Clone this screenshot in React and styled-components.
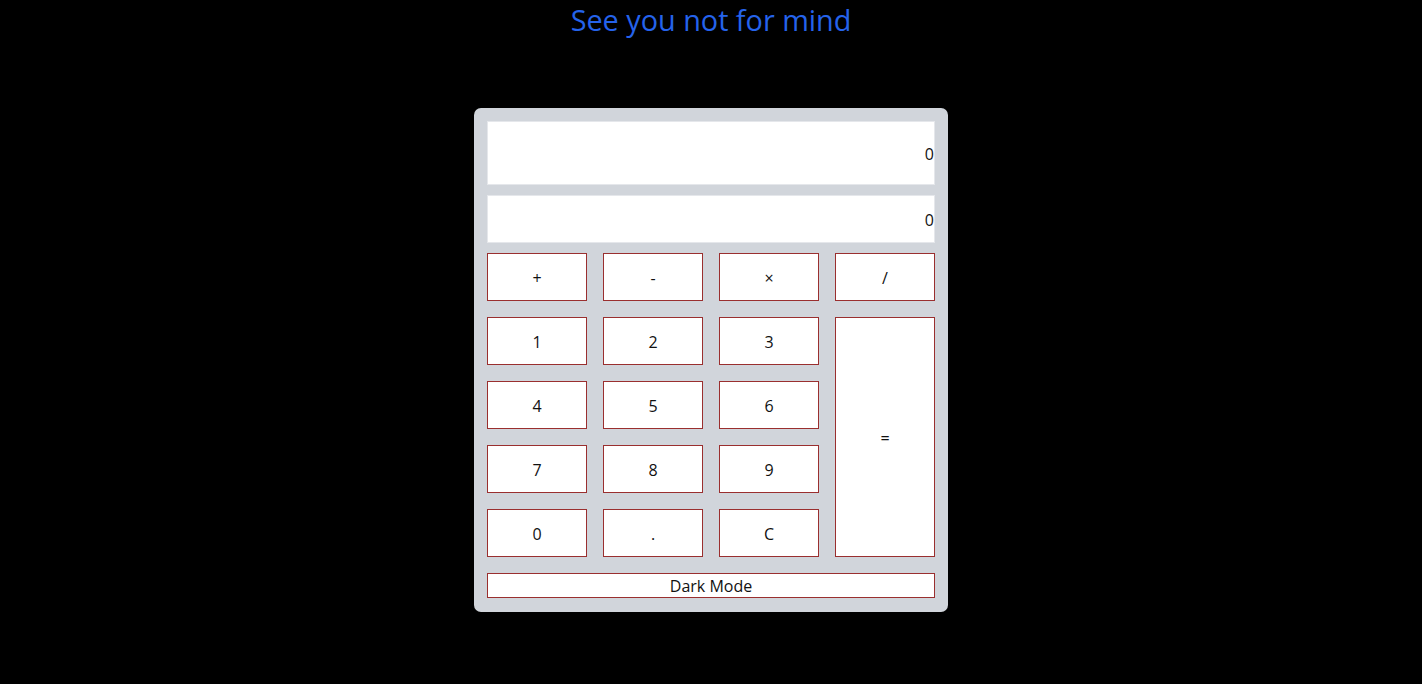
import React, { useState } from 'react';
import styled, { createGlobalStyle } from 'styled-components';

const GlobalStyle = createGlobalStyle`
  html, body {
    margin: 0;
    padding: 0;
    background: #000;
    font-family: "Open Sans", "Noto Sans", sans-serif;
  }
`;

const Page = styled.div`
  min-height: 684px;
  display: flex;
  flex-direction: column;
  align-items: center;
`;

const Title = styled.h1`
  margin: 0;
  height: 108px;
  padding-top: 1px;
  box-sizing: border-box;
  font-size: 28.8px;
  font-weight: 400;
  color: #2563eb;
  line-height: 38px;
`;

const Panel = styled.div`
  width: 474px;
  box-sizing: border-box;
  padding: 13px 13px 14px;
  background: #d1d5db;
  border-radius: 7px;
  display: flex;
  flex-direction: column;
`;

const Display = styled.div`
  height: ${({ $h }) => $h}px;
  margin-bottom: 10px;
  padding-top: 2px;
  box-sizing: border-box;
  background: #fff;
  border: 1px solid #e5e7eb;
  display: flex;
  align-items: center;
  justify-content: flex-end;
  font-size: 16px;
  color: #111;
`;

const Keys = styled.div`
  display: grid;
  grid-template-columns: repeat(4, 100px);
  grid-auto-rows: 48px;
  gap: 16px;
`;

const Key = styled.button`
  box-sizing: border-box;
  background: #fff;
  border: 1px solid #9a2f2f;
  color: #111;
  font-family: inherit;
  font-size: 16px;
  padding: 2px 0 0;
  cursor: pointer;
  grid-row: ${({ $tall }) => ($tall ? 'span 4' : 'auto')};
  grid-column: ${({ $col }) => $col || 'auto'};
`;

const ModeButton = styled.button`
  margin-top: 16px;
  height: 25px;
  box-sizing: border-box;
  background: #fff;
  border: 1px solid #9a2f2f;
  color: #111;
  font-family: inherit;
  font-size: 16px;
  padding: 0;
  line-height: 22px;
`;

const App = () => {
  const [top] = useState('0');
  const [bottom] = useState('0');
  return (
    <Page>
      <GlobalStyle />
      <Title>See you not for mind</Title>
      <Panel>
        <Display $h={64}>{top}</Display>
        <Display $h={48}>{bottom}</Display>
        <Keys>
          <Key>+</Key>
          <Key>-</Key>
          <Key>×</Key>
          <Key>/</Key>
          <Key>1</Key>
          <Key>2</Key>
          <Key>3</Key>
          <Key $tall $col="4">=</Key>
          <Key>4</Key>
          <Key>5</Key>
          <Key>6</Key>
          <Key>7</Key>
          <Key>8</Key>
          <Key>9</Key>
          <Key>0</Key>
          <Key>.</Key>
          <Key>C</Key>
        </Keys>
        <ModeButton>Dark Mode</ModeButton>
      </Panel>
    </Page>
  );
};

export default App;
